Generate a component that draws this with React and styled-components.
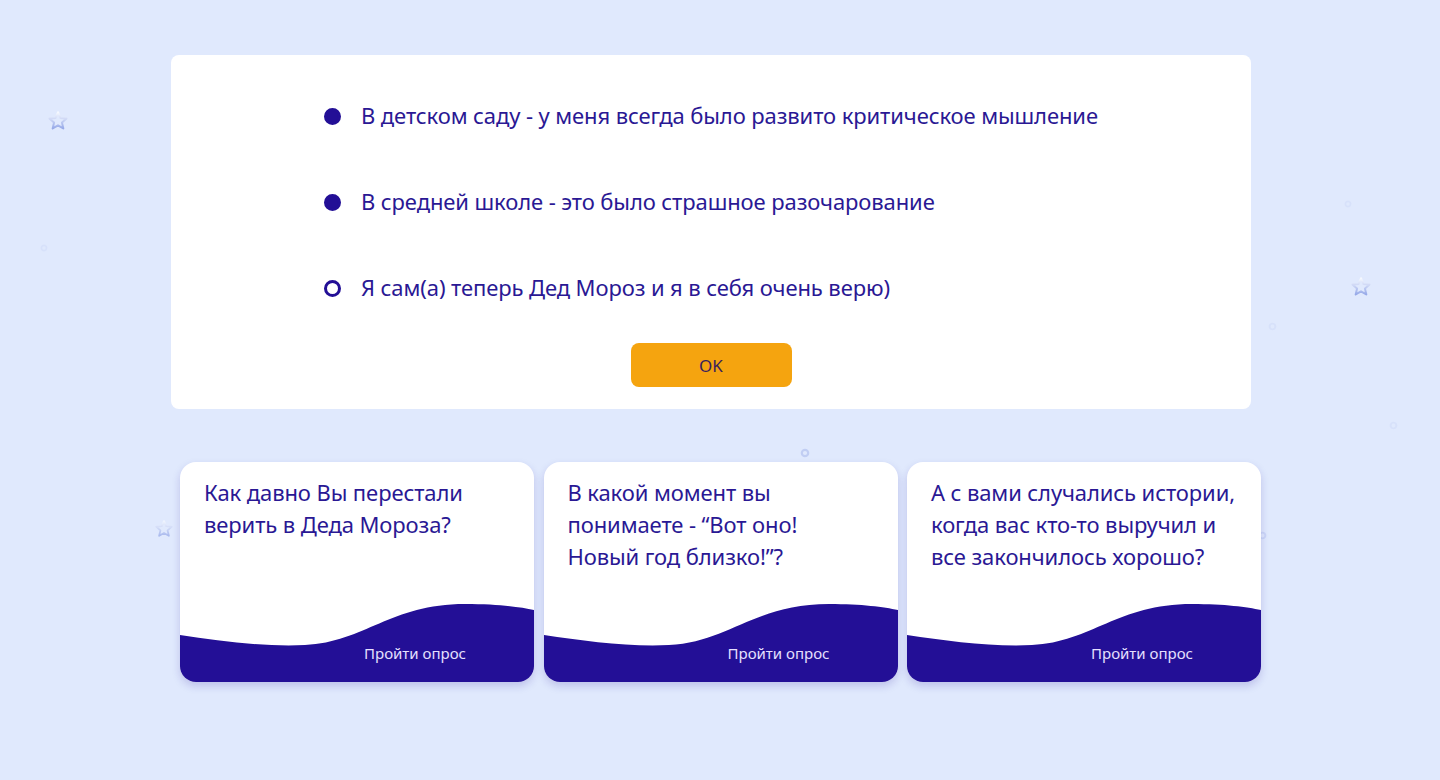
import React from 'react';
import styled, { createGlobalStyle } from 'styled-components';

const GlobalStyle = createGlobalStyle`
  html, body {
    margin: 0;
    padding: 0;
    background: #e0e9fd;
  }
  body {
    font-family: "Noto Sans", "Open Sans", sans-serif;
    color: #261392;
  }
`;

const Page = styled.div`
  position: relative;
  min-height: 780px;
  overflow: hidden;
  padding: 55px 0 0 171px;
  box-sizing: border-box;
`;

const Content = styled.div`
  position: relative;
  z-index: 1;
  width: 1090px;
  display: flex;
  flex-direction: column;
  gap: 53px;
`;

const Panel = styled.section`
  width: 1080px;
  background: #ffffff;
  border-radius: 8px;
  padding: 44px 0 22px;
  box-sizing: border-box;
  display: flex;
  flex-direction: column;
  align-items: center;
`;

const Options = styled.ul`
  list-style: none;
  margin: 0;
  padding: 0;
  display: flex;
  flex-direction: column;
  gap: 54px;
`;

const Option = styled.li`
  display: flex;
  align-items: center;
  gap: 20px;
  height: 32px;
  font-size: 22px;
  color: #2a1894;
  letter-spacing: -0.1px;
`;

const Radio = styled.span`
  width: 17px;
  height: 17px;
  margin-top: 2px;
  border-radius: 50%;
  box-sizing: border-box;
  flex-shrink: 0;
  background: ${(p) => (p.$checked ? '#230f96' : '#ffffff')};
  border: 3px solid #230f96;
`;

const OkButton = styled.button`
  margin-top: 40px;
  width: 161px;
  height: 44px;
  border: none;
  border-radius: 8px;
  background: #f5a40f;
  color: #3a1e5c;
  font-family: "Noto Sans", "Open Sans", sans-serif;
  font-size: 17px;
  cursor: pointer;
`;

const Cards = styled.div`
  display: grid;
  grid-template-columns: repeat(3, 354px);
  column-gap: 9.5px;
  padding-left: 9px;
`;

const Card = styled.article`
  position: relative;
  height: 220px;
  background: #ffffff;
  border-radius: 16px;
  overflow: hidden;
  box-shadow: 0 4px 8px rgba(35, 15, 150, 0.18);
  display: flex;
  flex-direction: column;
  justify-content: space-between;
`;

const Question = styled.p`
  margin: 0;
  padding: 14px 24px 0;
  font-size: 22px;
  line-height: 32px;
  color: #2a1894;
  letter-spacing: -0.1px;
`;

const CardFooter = styled.div`
  position: relative;
  height: 80px;
  display: flex;
  align-items: flex-end;
  justify-content: flex-end;
  padding: 0 68px 19px 0;
  box-sizing: border-box;
`;

const Wave = styled.svg`
  position: absolute;
  left: 0;
  top: 0;
  width: 100%;
  height: 100%;
`;

const FooterLink = styled.span`
  position: relative;
  font-size: 15px;
  color: #e6e0ff;
`;

const Deco = styled.svg`
  position: absolute;
  z-index: 0;
  opacity: ${(p) => p.$o || 1};
  filter: blur(0.6px);
`;

const questions = [
  'Как давно Вы перестали верить в Деда Мороза?',
  'В какой момент вы понимаете - “Вот оно! Новый год близко!”?',
  'А с вами случались истории, когда вас кто-то выручил и все закончилось хорошо?',
];

const options = [
  { text: 'В детском саду - у меня всегда было развито критическое мышление', checked: true },
  { text: 'В средней школе - это было страшное разочарование', checked: true },
  { text: 'Я сам(а) теперь Дед Мороз и я в себя очень верю)', checked: false },
];

const stars = [
  { x: 47, y: 110, s: 22, o: 0.75 },
  { x: 1350, y: 276, s: 22, o: 0.75 },
  { x: 154, y: 519, s: 20, o: 0.55 },
];

const dots = [
  { x: 800, y: 448, s: 10, o: 0.55 },
  { x: 1258, y: 531, s: 9, o: 0.35 },
  { x: 1268, y: 322, s: 9, o: 0.15 },
  { x: 1389, y: 421, s: 9, o: 0.15 },
  { x: 1344, y: 200, s: 8, o: 0.15 },
  { x: 40, y: 244, s: 8, o: 0.15 },
];

const Star = ({ x, y, s, o }) => (
  <Deco $o={o} style={{ left: x, top: y }} width={s} height={s} viewBox="0 0 24 24">
    <defs>
      <linearGradient id={`sg${x}`} x1="0" y1="0" x2="0" y2="1">
        <stop offset="0" stopColor="#ffffff" />
        <stop offset="1" stopColor="#7f95e2" />
      </linearGradient>
    </defs>
    <path
      d="M12 2.5l2.7 6.1 6.6.6-5 4.4 1.5 6.5L12 16.7l-5.8 3.4 1.5-6.5-5-4.4 6.6-.6z"
      fill="none"
      stroke={`url(#sg${x})`}
      strokeWidth="2.2"
      strokeLinejoin="round"
    />
  </Deco>
);

const Dot = ({ x, y, s, o }) => (
  <Deco $o={o} style={{ left: x, top: y }} width={s} height={s} viewBox="0 0 10 10">
    <circle cx="5" cy="5" r="3.2" fill="none" stroke="#a9b8ec" strokeWidth="2.2" />
  </Deco>
);

const App = () => {
  return (
    <>
      <GlobalStyle />
      <Page>
        {stars.map((st) => (
          <Star key={`s${st.x}`} {...st} />
        ))}
        {dots.map((d) => (
          <Dot key={`d${d.x}`} {...d} />
        ))}
        <Content>
          <Panel>
            <Options>
              {options.map((o) => (
                <Option key={o.text}>
                  <Radio $checked={o.checked} />
                  {o.text}
                </Option>
              ))}
            </Options>
            <OkButton>OK</OkButton>
          </Panel>
          <Cards>
            {questions.map((q) => (
              <Card key={q}>
                <Question>{q}</Question>
                <CardFooter>
                  <Wave viewBox="0 0 354 80" preserveAspectRatio="none">
                    <path
                      d="M0 33 C40 39 85 45 125 43 C185 40 210 2 285 2 C318 2 340 5 354 8 L354 80 L0 80 Z"
                      fill="#230f96"
                    />
                  </Wave>
                  <FooterLink>Пройти опрос</FooterLink>
                </CardFooter>
              </Card>
            ))}
          </Cards>
        </Content>
      </Page>
    </>
  );
};

export default App;
